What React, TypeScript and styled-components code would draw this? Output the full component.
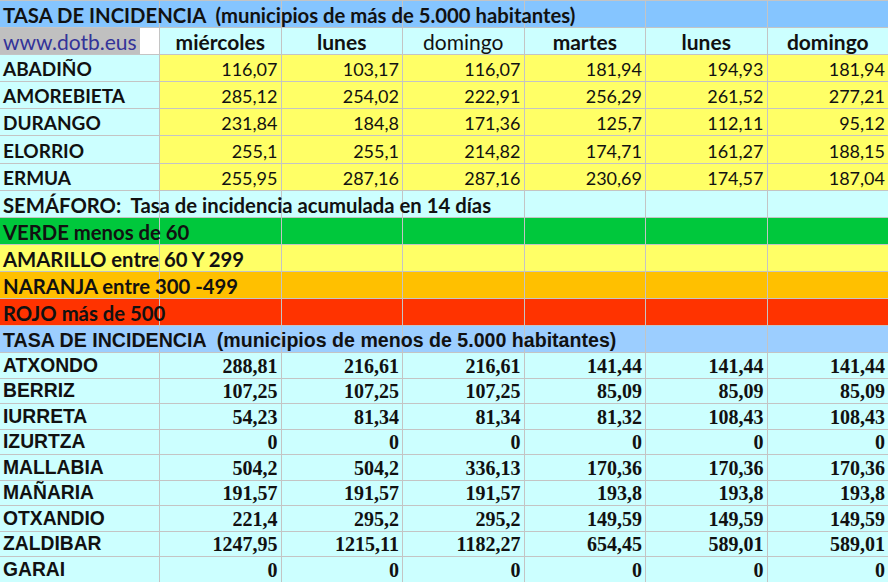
import React from "react";
import styled, { createGlobalStyle } from "styled-components";

const Global = createGlobalStyle`
  html, body { margin: 0; padding: 0; background: #ffffff; }
  body { width: 888px; height: 582px; overflow: hidden; }
`;

const C = {
  line: "#c4c4c4",
  blueTop: "#85c5ff",
  blueBottom: "#9cceff",
  cyan: "#ccffff",
  yellow: "#ffff66",
  green: "#00c83c",
  orange: "#ffc000",
  red: "#ff3300",
};

const Sheet = styled.div`
  display: flex;
  flex-direction: column;
  gap: 1px;
  width: 888px;
  padding-top: 1px;
  background: ${C.line};
`;

const Row = styled.div<{ $h: number }>`
  display: grid;
  grid-template-columns: 159px repeat(6, 1fr);
  column-gap: 1px;
  height: ${(p) => p.$h}px;
`;

type Kind = "band" | "name" | "day" | "upperNum" | "lowerBand" | "lowerName" | "lowerNum";

const sizes: Record<Kind, string> = {
  band: "20.3px",
  name: "19px",
  day: "21px",
  upperNum: "18px",
  lowerBand: "19.6px",
  lowerName: "19.3px",
  lowerNum: "20px",
};

const families: Record<Kind, string> = {
  band: `Lato, "Open Sans", sans-serif`,
  name: `Lato, "Open Sans", sans-serif`,
  day: `Lato, "Open Sans", sans-serif`,
  upperNum: `Lato, "Open Sans", sans-serif`,
  lowerBand: `"Liberation Sans", Arial, sans-serif`,
  lowerName: `"Liberation Sans", Arial, sans-serif`,
  lowerNum: `"Liberation Serif", "Times New Roman", serif`,
};

const Cell = styled.div<{ $bg: string; $align?: "left" | "right" | "center"; $kind: Kind; $light?: boolean }>`
  background: ${(p) => p.$bg};
  display: flex;
  align-items: flex-end;
  justify-content: ${(p) =>
    p.$align === "right" ? "flex-end" : p.$align === "center" ? "center" : "flex-start"};
  padding: 0 3px 2px 3px;
  box-sizing: border-box;
  min-width: 0;
  white-space: pre;
  color: #111111;
  font-family: ${(p) => families[p.$kind]};
  font-weight: ${(p) => (p.$kind === "upperNum" || p.$light ? 400 : 700)};
  font-size: ${(p) => sizes[p.$kind]};
  line-height: 20px;
`;

const Spill = styled.span`
  position: relative;
  z-index: 1;
`;

const WebCell = styled(Cell)`
  background: linear-gradient(to right, #c0c0c0 140px, #ffffff 140px);
  color: #333399;
`;

const UPPER_H = 26.1;
const LOWER_H = 24.52;

const days: { d: string; light?: boolean }[] = [
  { d: "miércoles" },
  { d: "lunes" },
  { d: "domingo", light: true },
  { d: "martes" },
  { d: "lunes" },
  { d: "domingo" },
];

const upper: [string, string[]][] = [
  ["ABADIÑO", ["116,07", "103,17", "116,07", "181,94", "194,93", "181,94"]],
  ["AMOREBIETA", ["285,12", "254,02", "222,91", "256,29", "261,52", "277,21"]],
  ["DURANGO", ["231,84", "184,8", "171,36", "125,7", "112,11", "95,12"]],
  ["ELORRIO", ["255,1", "255,1", "214,82", "174,71", "161,27", "188,15"]],
  ["ERMUA", ["255,95", "287,16", "287,16", "230,69", "174,57", "187,04"]],
];

const lower: [string, string[]][] = [
  ["ATXONDO", ["288,81", "216,61", "216,61", "141,44", "141,44", "141,44"]],
  ["BERRIZ", ["107,25", "107,25", "107,25", "85,09", "85,09", "85,09"]],
  ["IURRETA", ["54,23", "81,34", "81,34", "81,32", "108,43", "108,43"]],
  ["IZURTZA", ["0", "0", "0", "0", "0", "0"]],
  ["MALLABIA", ["504,2", "504,2", "336,13", "170,36", "170,36", "170,36"]],
  ["MAÑARIA", ["191,57", "191,57", "191,57", "193,8", "193,8", "193,8"]],
  ["OTXANDIO", ["221,4", "295,2", "295,2", "149,59", "149,59", "149,59"]],
  ["ZALDIBAR", ["1247,95", "1215,11", "1182,27", "654,45", "589,01", "589,01"]],
  ["GARAI", ["0", "0", "0", "0", "0", "0"]],
];

const semaforo: [string, string][] = [
  ["VERDE menos de 60", C.green],
  ["AMARILLO entre 60 Y 299", C.yellow],
  ["NARANJA entre 300 -499", C.orange],
  ["ROJO más de 500", C.red],
];

const empties = [0, 1, 2, 3, 4, 5];

function BandRow({ text, bg, h, kind }: { text: string; bg: string; h: number; kind: Kind }) {
  return (
    <Row $h={h}>
      <Cell $bg={bg} $kind={kind}>
        <Spill>{text}</Spill>
      </Cell>
      {empties.map((i) => (
        <Cell key={i} $bg={bg} $kind={kind} />
      ))}
    </Row>
  );
}

export default function App() {
  return (
    <>
      <Global />
      <Sheet>
        <BandRow
          text="TASA DE INCIDENCIA  (municipios de más de 5.000 habitantes)"
          bg={C.blueTop}
          h={UPPER_H}
          kind="band"
        />
        <Row $h={UPPER_H}>
          <WebCell $bg="#fff" $kind="day" $light>
            www.dotb.eus
          </WebCell>
          {days.map((d, i) => (
            <Cell key={i} $bg={C.cyan} $kind="day" $align="center" $light={d.light}>
              {d.d}
            </Cell>
          ))}
        </Row>
        {upper.map(([name, vals]) => (
          <Row key={name} $h={UPPER_H}>
            <Cell $bg={C.cyan} $kind="name">
              {name}
            </Cell>
            {vals.map((v, i) => (
              <Cell key={i} $bg={C.yellow} $kind="upperNum" $align="right">
                {v}
              </Cell>
            ))}
          </Row>
        ))}
        <BandRow
          text="SEMÁFORO:  Tasa de incidencia acumulada en 14 días"
          bg={C.cyan}
          h={UPPER_H}
          kind="band"
        />
        {semaforo.map(([t, bg]) => (
          <BandRow key={t} text={t} bg={bg} h={UPPER_H} kind="band" />
        ))}
        <BandRow
          text="TASA DE INCIDENCIA  (municipios de menos de 5.000 habitantes)"
          bg={C.blueBottom}
          h={UPPER_H}
          kind="lowerBand"
        />
        {lower.map(([name, vals]) => (
          <Row key={name} $h={LOWER_H}>
            <Cell $bg={C.cyan} $kind="lowerName">
              {name}
            </Cell>
            {vals.map((v, i) => (
              <Cell key={i} $bg={C.cyan} $kind="lowerNum" $align="right">
                {v}
              </Cell>
            ))}
          </Row>
        ))}
      </Sheet>
    </>
  );
}
